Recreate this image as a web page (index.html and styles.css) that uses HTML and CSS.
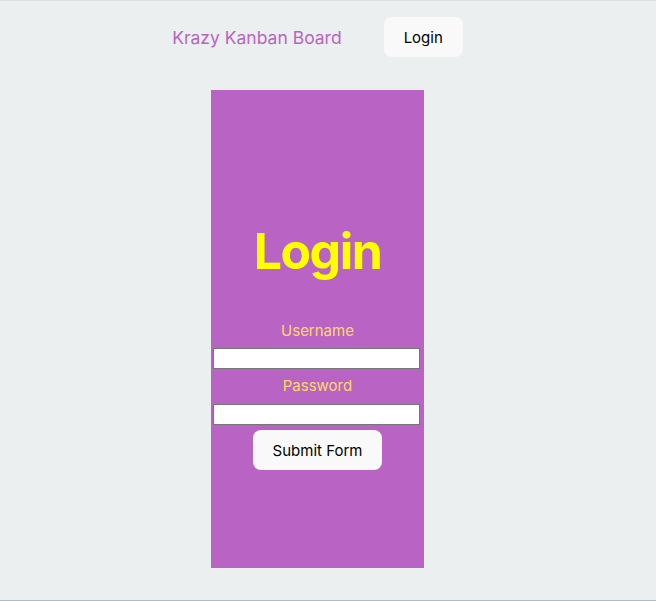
FILE: index.html
```html
<!DOCTYPE html>
<html lang="en">
<head>
<meta charset="utf-8">
<title>Krazy Kanban Board</title>
<link rel="stylesheet" href="styles.css">
</head>
<body>
<div class="app">
  <nav class="nav">
    <span class="brand">Krazy Kanban Board</span>
    <button class="btn" type="button">Login</button>
  </nav>
  <div class="card">
    <h1 class="title">Login</h1>
    <form class="form">
      <label class="label" for="username">Username</label>
      <input class="input" id="username" type="text">
      <label class="label label-pw" for="password">Password</label>
      <input class="input input-pw" id="password" type="password">
      <button class="btn btn-submit" type="button">Submit Form</button>
    </form>
  </div>
</div>
</body>
</html>
```
FILE: styles.css
```css
html, body {
  margin: 0;
  padding: 0;
}
body {
  background: #ebeff0;
  font-family: Inter, "Noto Sans", sans-serif;
  height: 601px;
  box-sizing: border-box;
  border-top: 1px solid #dde2e4;
  border-bottom: 1px solid #a9c0c4;
  overflow: hidden;
}
.app {
  width: 635px;
  display: flex;
  flex-direction: column;
  align-items: center;
  padding-top: 16px;
}
.nav {
  display: flex;
  align-items: center;
  gap: 42px;
  height: 40px;
}
.brand {
  color: #b964c4;
  font-size: 17.5px;
  font-weight: 400;
}
.btn {
  background: #f9f9f9;
  border: 1px solid transparent;
  border-radius: 8px;
  padding: 0 19px;
  height: 40px;
  font-family: Inter, "Noto Sans", sans-serif;
  font-size: 15px;
  font-weight: 400;
  color: #000;
  cursor: pointer;
}
.card {
  margin-top: 33px;
  width: 213px;
  height: 478px;
  box-sizing: border-box;
  background: #b964c4;
  padding-top: 133px;
  display: flex;
  flex-direction: column;
  align-items: center;
}
.title {
  margin: 0;
  font-size: 50px;
  line-height: 56px;
  font-weight: 700;
  color: #ffff00;
  letter-spacing: -1.5px;
}
.form {
  width: 100%;
  margin-top: 40px;
  display: flex;
  flex-direction: column;
  align-items: center;
}
.label {
  color: #ffd966;
  font-size: 15px;
  line-height: 24px;
  font-weight: 400;
}
.input {
  align-self: flex-start;
  margin: 5px 0 0 2px;
  width: 207px;
  height: 21px;
  box-sizing: border-box;
  border: 1px solid #767676;
  background: #fff;
  padding: 1px 2px;
}
.label-pw {
  margin-top: 5px;
}
.input-pw {
  margin-top: 6px;
}
.btn-submit {
  margin-top: 5px;
}
```
